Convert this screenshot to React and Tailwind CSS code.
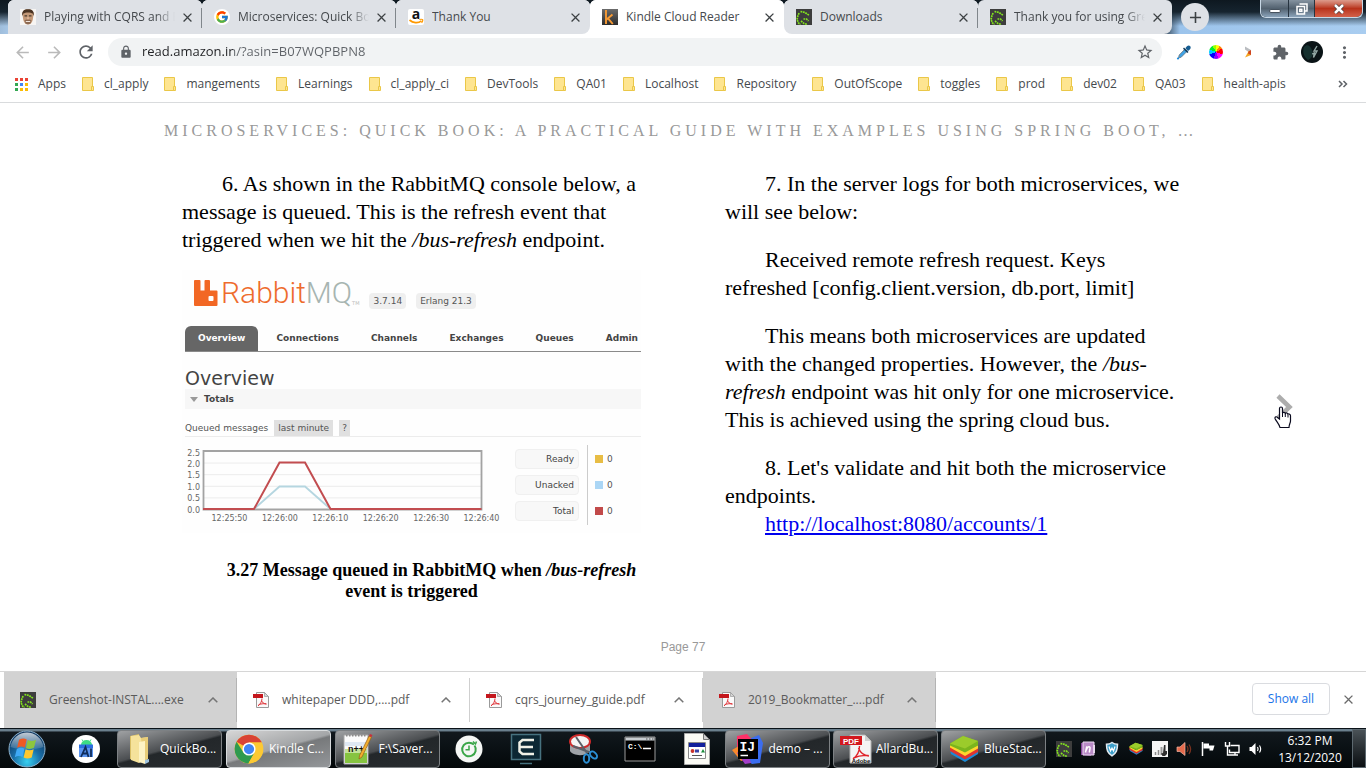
import React from "react";
import {
  MdArrowBack,
  MdArrowForward,
  MdRefresh,
  MdLock,
  MdStarBorder,
  MdExtension,
  MdMoreVert,
  MdClose,
  MdAdd,
} from "react-icons/md";
import { FcGoogle } from "react-icons/fc";

/* ---------- small drawings ---------- */

function FaceIcon() {
  return (
    <svg viewBox="0 0 16 16" className="size-4 shrink-0" aria-hidden="true">
      <rect width="16" height="16" fill="#f7f5f3" />
      <path d="M2.500 6C2 2 4.500.5 8 .5s6 1.500 5.500 5.500l-.8 5C12 14 10 15.500 8 15.500S4 14 3.300 11z" fill="#c39877" />
      <path d="M2.300 7C1.600 2 4 .3 8 .3S14.400 2 13.700 7l-1-2.500C10.500 3 5.500 3 3.300 4.500z" fill="#4a3322" />
      <path d="M4.500 11.500c1-1.300 6-1.300 7 0L10.500 14.500c-1.500 1-3.500 1-5 0z" fill="#8d6a52" />
      <path d="M5.800 12h4.400v1H5.800z" fill="#f2e6dd" />
      <path d="M4.500 6.300h2.600v1.200H4.500zM8.900 6.300h2.600v1.200H8.900z" fill="#4d3a2c" />
      <path d="M7.300 8h1.400l.4 2.300H6.900z" fill="#dcb294" />
    </svg>
  );
}

function AmazonIcon() {
  return (
    <svg viewBox="0 0 16 16" className="size-4 shrink-0" aria-hidden="true">
      <rect width="16" height="16" rx="2" fill="#fff" />
      <text x="8" y="9.500" textAnchor="middle" fontFamily="Open Sans, sans-serif" fontWeight="700" fontSize="14" fill="#111">a</text>
      <path d="M1.500 11c3.500 3 8.500 3.500 12 .9" fill="none" stroke="#ff9900" strokeWidth="1.700" />
      <path d="M11.300 10.500c1.700-.3 3-.2 3.300.2s-.1 1.900-1 3.100" fill="none" stroke="#ff9900" strokeWidth="1.200" />
    </svg>
  );
}

function KindleIcon() {
  return (
    <svg viewBox="0 0 16 16" className="size-4 shrink-0" aria-hidden="true">
      <defs>
        <linearGradient id="kg" x1="0" y1="0" x2="0" y2="1">
          <stop offset="0" stopColor="#6b6b6b" />
          <stop offset="1" stopColor="#2c2c2c" />
        </linearGradient>
      </defs>
      <rect width="16" height="16" fill="url(#kg)" />
      <path d="M4 1v14M10.500 5.500L4.500 10.500M6 9.300l4.800 5.700" fill="none" stroke="#f79a34" strokeWidth="1.900" />
    </svg>
  );
}

function GreenshotIcon() {
  return (
    <svg viewBox="0 0 16 16" className="size-4 shrink-0" aria-hidden="true">
      <rect width="16" height="16" fill="#3d3d3d" />
      <path d="M4.500 2.500l4.500 1 4.500 3M3 4L1.700 7.500l-.7 3 1.500 3.500 2 1.500M5 12l3 2.500 3.500 1M7.500 10h3l2 2" fill="none" stroke="#84e61e" strokeWidth="1.700" strokeDasharray="1.800 .7" />
    </svg>
  );
}

function PdfIcon() {
  return (
    <svg viewBox="0 0 16 16" className="size-4 shrink-0" aria-hidden="true">
      <path d="M3.500.5h8l4 4v11h-12z" fill="#fafafa" stroke="#9a9a9a" />
      <path d="M11.500.5v4h4z" fill="#d5d5d5" stroke="#9a9a9a" strokeWidth=".7" />
      <path d="M0 2h10v4H0z" fill="#c4161c" />
      <path d="M5 14c2-1.500 4-4.500 4-7.500M8.500 8.500c.8 2 2.500 3.500 5 3.700M5.500 12.800c2-.9 5-1.300 7.800-1.100" fill="none" stroke="#e0353a" strokeWidth="1" />
    </svg>
  );
}

function FolderIcon() {
  return (
    <svg viewBox="0 0 12 14" className="h-3.5 w-3 shrink-0" aria-hidden="true">
      <path d="M.5.5h10v13H.5z" fill="#fee591" stroke="#eac748" />
      <path d="M9.500 9.500h2v4h-2z" fill="#fee591" stroke="#eac748" />
    </svg>
  );
}

function AppsIcon() {
  const dots = ["#ea4335", "#ea4335", "#ea4335", "#34a853", "#4285f4", "#fbbc04", "#34a853", "#fbbc04", "#fbbc04"];
  return (
    <svg viewBox="0 0 13 13" className="size-[13px] shrink-0" aria-hidden="true">
      {dots.map((c, i) => (
        <rect key={i} x={(i % 3) * 5} y={Math.floor(i / 3) * 5} width="3" height="3" fill={c} />
      ))}
    </svg>
  );
}

function Caret() {
  return (
    <svg viewBox="0 0 10 6" className="h-1.5 w-2.5" aria-hidden="true">
      <path d="M.7 5.300L5 1l4.300 4.300" fill="none" stroke="#757575" strokeWidth="1.500" />
    </svg>
  );
}

function DropperIcon() {
  return (
    <svg viewBox="0 0 16 16" className="size-4" aria-hidden="true">
      <path d="M2.500 14l.7-3L9 5l2.200 2.200-6 6z" fill="#3ea3e6" stroke="#6b7680" strokeWidth=".8" />
      <path d="M8 3.500L12.500 8l-1.200 1L7 4.700z" fill="#123c5c" />
      <path d="M9.500 4.500C10.500 2 12.500.7 14 2s.5 3.500-2 5z" fill="#165d92" />
      <circle cx="2" cy="14.500" r="1.100" fill="#1a8be0" />
    </svg>
  );
}

function WheelIcon() {
  return (
    <span className="block size-3.5 rounded-full bg-[conic-gradient(#ff0_0_30deg,#ff8000_30deg_60deg,#f00_60deg_110deg,#f0f_110deg_160deg,#80f_160deg_200deg,#00f_200deg_250deg,#0cf_250deg_290deg,#0e3_290deg_330deg,#9f0_330deg)]" />
  );
}

function TriangleIcon() {
  return (
    <svg viewBox="0 0 16 16" className="size-4" aria-hidden="true">
      <path d="M5 2.500l6 3.500v5L8.500 8 5 5.500z" fill="#b9bcc0" />
      <path d="M5 13.500l4-7L11 8v3z" fill="#f5a623" />
      <path d="M8.500 7.500L11 6v5L8 9.500z" fill="#cf4520" />
    </svg>
  );
}

function ChromeLogo() {
  return (
    <svg viewBox="0 0 48 48" className="size-[30px] shrink-0" aria-hidden="true">
      <circle cx="24" cy="24" r="23" fill="#fcc934" />
      <path d="M24 24L4.100 12.500A23 23 0 0 1 43.900 12.500L44 13.500H24z" fill="#d94335" />
      <path d="M24 24L33.100 29.200 23 47A23 23 0 0 1 4.100 12.500L14.900 29.200z" fill="#2f9a4f" />
      <path d="M24 13.500h19.900A23 23 0 0 1 23 47l10.100-17.500z" fill="#fcc934" />
      <circle cx="24" cy="24" r="10.500" fill="#fff" />
      <circle cx="24" cy="24" r="8.200" fill="#4285f4" />
    </svg>
  );
}

function WindowsOrb() {
  return (
    <svg viewBox="0 0 38 38" className="size-[38px]" aria-hidden="true">
      <defs>
        <radialGradient id="orb" cx=".5" cy=".85" r=".85">
          <stop offset="0" stopColor="#38d0f0" />
          <stop offset=".45" stopColor="#1a6fa8" />
          <stop offset="1" stopColor="#0c2d55" />
        </radialGradient>
        <linearGradient id="shine" x1="0" y1="0" x2="0" y2="1">
          <stop offset="0" stopColor="#fff" stopOpacity=".75" />
          <stop offset="1" stopColor="#fff" stopOpacity=".12" />
        </linearGradient>
      </defs>
      <circle cx="19" cy="19" r="18" fill="url(#orb)" stroke="#8fb4cf" strokeWidth="1" />
      <path d="M2.500 17C4 8 11 2.500 19 2.500S34 8 35.500 17C28 20 10 20 2.500 17z" fill="url(#shine)" />
      <path d="M11 9.800c3-1.600 5.400-1.600 7.700-.3l-1.900 8c-2.400-1.400-5-1.300-7.700.3z" fill="#ee5a24" />
      <path d="M19.800 10c2.700 1.400 5.100 1.400 8.200-.2l-2 8c-2.900 1.500-5.500 1.500-8.100.2z" fill="#8cc63f" />
      <path d="M8.800 19c2.900-1.500 5.300-1.500 7.700-.2l-2 8.200c-2.400-1.400-4.900-1.300-7.700.2z" fill="#3fa9f5" />
      <path d="M17.600 19.300c2.600 1.300 5.200 1.300 8.100-.1l-2 8.200c-2.900 1.400-5.500 1.300-8.100 0z" fill="#fdc82f" />
    </svg>
  );
}

function AndroidStudioIcon() {
  return (
    <svg viewBox="0 0 28 28" className="size-7" aria-hidden="true">
      <circle cx="14" cy="14" r="14" fill="#fff" />
      <path d="M9 10a5.500 5 0 0 1 11 0z" fill="#3ddc84" />
      <path d="M11 6l-1-1.500M18 6l1-1.500" stroke="#3ddc84" />
      <path d="M7 9.500h14v4H7z" fill="#2d6fe0" />
      <path d="M7 13h14v9H7z" fill="#5b95f0" />
      <path d="M9 22l4.500-10 3 10M11 18.500h4.500M19 13.500V22" fill="none" stroke="#0f2d5c" strokeWidth="1.800" />
    </svg>
  );
}

function ExplorerIcon() {
  return (
    <svg viewBox="0 0 24 32" className="h-8 w-6 shrink-0" aria-hidden="true">
      <path d="M2 3l9-2v28l-9-3z" fill="#d9bf66" />
      <path d="M3 3l8-1 2 3 7-1v22l-9 4-8-3z" fill="#f5e29b" />
      <path d="M13 5l7-1v22l-4 2z" fill="#e8cd78" />
      <path d="M11 9l6-1v23l-6-2z" fill="#fdf3c4" />
      <path d="M17 27l4-1v3l-4 2z" fill="#9fc3df" />
    </svg>
  );
}

function NotepadIcon() {
  return (
    <svg viewBox="0 0 30 32" className="h-8 w-[30px] shrink-0" aria-hidden="true">
      <path d="M1 2h24v29H1z" fill="#fbfbfb" stroke="#a7a7a7" />
      <path d="M2 9h22v4H2z" fill="#dfe8f3" />
      <path d="M2 20h22v10H2z" fill="#86c440" />
      <path d="M2 16h22v4H2z" fill="#c4e39a" />
      <path d="M3 2.500h20" stroke="#8b8b8b" strokeDasharray="1.500 1.500" strokeWidth="2" />
      <text x="5" y="19" fontFamily="Liberation Sans, sans-serif" fontWeight="700" fontSize="9" fill="#111">n++</text>
      <path d="M26 3l2.500 1L19 24l-3 2 .5-3.500z" fill="#f2ae2e" stroke="#93601b" strokeWidth=".7" />
      <path d="M26 3l1-2 2.500 1-1 2z" fill="#c8303c" />
    </svg>
  );
}

function TimerIcon() {
  return (
    <svg viewBox="0 0 28 28" className="size-7" aria-hidden="true">
      <circle cx="14" cy="14" r="13.500" fill="#f5f7f5" />
      <path d="M19.500 10.500A6.800 6.800 0 1 1 14 7.700c2 0 3.500.6 5 1.800" fill="none" stroke="#3aa648" strokeWidth="2" />
      <path d="M14 10.500v4.200h-3.500M18 6.500l2.500 2.500 1-2.500" fill="none" stroke="#3aa648" strokeWidth="1.500" />
    </svg>
  );
}

function TerminalEIcon() {
  return (
    <svg viewBox="0 0 32 32" className="size-8" aria-hidden="true">
      <path d="M1.500 1.500h29v25h-29z" fill="#0c2733" stroke="#47727f" strokeWidth="1.500" />
      <path d="M24 7H12.500L9.500 9.500v9l3 2.500H24M10 14h13" fill="none" stroke="#f0f0e6" strokeWidth="2.500" />
      <path d="M10 30.500h12" stroke="#47727f" strokeWidth="1.500" />
    </svg>
  );
}

function SnipIcon() {
  return (
    <svg viewBox="0 0 32 32" className="size-8" aria-hidden="true">
      <path d="M3 9v9c3 5 15 6 20 0V9z" fill="#9ea2a7" />
      <ellipse cx="13" cy="8.500" rx="10" ry="6.500" fill="#f4f4f4" stroke="#cf2a2a" strokeWidth="2" />
      <path d="M9 4l11 16M6 13l17 6.500" stroke="#5a6068" strokeWidth="2" />
      <ellipse cx="19.500" cy="25.500" rx="2.700" ry="4.200" fill="none" stroke="#2b8fd4" strokeWidth="2" />
      <ellipse cx="26.500" cy="22" rx="2.700" ry="4.200" fill="none" stroke="#2b8fd4" strokeWidth="2" transform="rotate(-45 26.500 22)" />
    </svg>
  );
}

function CmdIcon() {
  return (
    <svg viewBox="0 0 32 26" className="h-[26px] w-8" aria-hidden="true">
      <path d="M1 1h30v24H1z" fill="#000" stroke="#9a9a9a" />
      <path d="M1.500 1.500h29v3h-29z" fill="#c7ccd0" />
      <path d="M22 3h1.500M25 3h1.500M28 3h1.500" stroke="#555" />
      <text x="4" y="13" fontFamily="Liberation Mono, monospace" fontSize="8" fontWeight="700" fill="#fff">C:\</text>
      <path d="M19 12.500h8" stroke="#fff" strokeWidth="1.500" />
    </svg>
  );
}

function AppWindowIcon() {
  return (
    <svg viewBox="0 0 26 32" className="h-8 w-[26px]" aria-hidden="true">
      <path d="M.5.5h19l6 6v25H.5z" fill="#fbfbf5" stroke="#aaa" />
      <path d="M19.500.5v6h6z" fill="#cfcfcf" stroke="#777" />
      <path d="M4.500 9.500h17v16h-17z" fill="#fff" stroke="#8b8b8b" />
      <path d="M5 10h16v4H5z" fill="#12209c" />
      <circle cx="8.500" cy="18" r="1.900" fill="#c8322b" />
      <path d="M11 16.500h4v3h-4z" fill="#3a43a8" />
      <path d="M17 19.500l2-3.500 2 3.500z" fill="#1a8c3b" />
      <path d="M8 22.500h10" stroke="#555" />
    </svg>
  );
}

function IntelliJIcon() {
  return (
    <svg viewBox="0 0 32 32" className="size-8 shrink-0" aria-hidden="true">
      <path d="M17 6l10-4 4 8-3 20-8 1-8-6z" fill="#3b6df0" />
      <path d="M5 3l10-2 6 7-8 14-8-4z" fill="#fe3168" />
      <path d="M0 17l7-4 5 14-3 1z" fill="#fb8a2c" />
      <path d="M5 20l8-8 6 18-6 1z" fill="#a43ec9" />
      <path d="M6 6h20v20H6z" fill="#000" />
      <text x="7.500" y="17.500" fontFamily="Liberation Mono, monospace" fontSize="13" fontWeight="700" fill="#fff">IJ</text>
      <path d="M8.500 22.500H16" stroke="#fff" strokeWidth="1.500" />
    </svg>
  );
}

function AcrobatIcon() {
  return (
    <svg viewBox="0 0 32 32" className="size-8 shrink-0" aria-hidden="true">
      <path d="M10 2h15l6 6v22H10z" fill="#f4f4f4" stroke="#b3b3b3" />
      <path d="M25 2v6h6z" fill="#cfcfcf" />
      <path d="M0 3h22v9H0z" fill="#d2181e" />
      <text x="11" y="10.500" textAnchor="middle" fontFamily="Liberation Sans, sans-serif" fontSize="8" fontWeight="700" fill="#fff">PDF</text>
      <path d="M13 26c4-3 6.500-8 6.500-13M18.500 15c1.500 4 5 7.500 10.500 8M13.500 25c4-2 9-3 15-2.500" fill="none" stroke="#e0242b" strokeWidth="1.400" />
      <text x="21" y="30" textAnchor="middle" fontFamily="Liberation Sans, sans-serif" fontSize="6" fontWeight="700" fill="#111">Adobe</text>
    </svg>
  );
}

function BlueStacksIcon({ className }) {
  return (
    <svg viewBox="0 0 30 27" className={className} aria-hidden="true">
      <path d="M1 15l14 7 14-6v3l-13 8L2 19z" fill="#1a8ad6" />
      <path d="M1 12l14 7 14-6v4l-13 7.500L1 16z" fill="#e0342f" />
      <path d="M1 9l14 7.500L29 10v3.500l-13 7.500L1 12.500z" fill="#ffd52e" />
      <path d="M1 8.500L14 1l15 5v4.500l-13 7L1 10.500z" fill="#7ab51d" />
      <path d="M1 8.500L14 1l15 5-13 7.500z" fill="#9bcb2b" />
    </svg>
  );
}

const tray = [
  {
    label: "Greenshot",
    icon: <GreenshotIcon />,
  },
  {
    label: "OneNote",
    icon: (
      <svg viewBox="0 0 16 16" className="size-4">
        <path d="M1 2l10-1v14l-10-1z" fill="#87479c" />
        <path d="M3 1h11v13H3z" fill="#b98bc7" stroke="#ead9f0" />
        <path d="M13 4h2v8h-2z" fill="#e6d6ec" />
        <path d="M5.500 11.500l1.300-6 .2 2c1-2 3.300-2.500 3 0l-.7 4" fill="none" stroke="#fff" strokeWidth="1.500" />
      </svg>
    ),
  },
  {
    label: "Shield",
    icon: (
      <svg viewBox="0 0 16 16" className="size-4">
        <path d="M8 1.500c2 1.500 4 1.800 5.500 1.800C13.500 9 12.500 12 8 14.800 3.500 12 2.500 9 2.500 3.300 4 3.300 6 3 8 1.500z" fill="#3d9fca" stroke="#e3eaf0" strokeWidth="1.500" />
        <path d="M5 5.500l1.500 4.500L8 7l1.500 3L11 5.500" fill="none" stroke="#fff" strokeWidth="1.200" />
      </svg>
    ),
  },
  { label: "BlueStacks", icon: <BlueStacksIcon className="h-[13px] w-3.5" /> },
  {
    label: "Usage",
    icon: (
      <svg viewBox="0 0 16 16" className="size-4">
        <path d="M0 0h16v16H0z" fill="#f5f5f5" />
        <path d="M3.500 14v-3M6.500 14V9" stroke="#8a8a8a" strokeWidth="1.500" />
        <path d="M8.500 14V6h2v8z" fill="#9d9d9d" />
        <path d="M12 4h1.500v6H15v3l-2 2h-2.500L9 12.500l2-.5z" fill="#303030" />
      </svg>
    ),
  },
  {
    label: "Sound device",
    icon: (
      <svg viewBox="0 0 16 16" className="size-4">
        <path d="M1 6h3l5-4.500v13L4 10.500H1z" fill="#e56a4c" stroke="#f1b5a5" strokeWidth=".7" />
        <path d="M11 5c1.300 2 1.300 4 0 6M13 3.500c2 3 2 6.500 0 9.500" fill="none" stroke="#79311f" strokeWidth="1.300" />
      </svg>
    ),
  },
  {
    label: "Action Center",
    icon: (
      <svg viewBox="0 0 16 16" className="size-4">
        <path d="M2.500 1v14" stroke="#fff" strokeWidth="1.500" />
        <path d="M3.500 2.500h5.500v2h5.500l-1.500 5H9.500V7.500h-6z" fill="#fff" />
      </svg>
    ),
  },
  {
    label: "Network",
    icon: (
      <svg viewBox="0 0 16 16" className="size-4">
        <path d="M6.500 4.500H15v7H5.500v-3M8 14h6M11 11.500V14" fill="none" stroke="#fff" strokeWidth="1.400" />
        <path d="M1.500 1v4h4V1M3.500 5v9H8" fill="none" stroke="#fff" strokeWidth="1.400" />
      </svg>
    ),
  },
  {
    label: "Volume",
    icon: (
      <svg viewBox="0 0 16 16" className="size-4">
        <path d="M1.500 6h2L7.500 2v12l-4-4h-2z" fill="#fff" />
        <path d="M9.500 6c.8 1.300.8 2.700 0 4M11.500 4.500c1.500 2.300 1.500 4.700 0 7" fill="none" stroke="#fff" strokeWidth="1.200" />
      </svg>
    ),
  },
];

/* ---------- browser chrome ---------- */

const tabs = [
  { title: "Playing with CQRS and Event Sourcing", icon: <FaceIcon />, back: "bg-white", divider: true, fade: true },
  {
    title: "Microservices: Quick Book: A Practical Guide",
    icon: (
      <span className="flex size-4 shrink-0 items-center justify-center rounded-full bg-white">
        <FcGoogle size={14} />
      </span>
    ),
    back: "bg-white",
    divider: true,
    fade: true,
  },
  { title: "Thank You", icon: <AmazonIcon />, back: "bg-white", shape: "rounded-br-lg" },
  { title: "Kindle Cloud Reader", icon: <KindleIcon />, back: "bg-white", active: true },
  { title: "Downloads", icon: <GreenshotIcon />, back: "bg-white", shape: "rounded-bl-lg", divider: true },
  { title: "Thank you for using Greenshot", icon: <GreenshotIcon />, shape: "rounded-br-lg", fade: true },
];

function TabStrip() {
  return (
    <header className="flex h-[34px] bg-[linear-gradient(to_bottom,#0e1820_0,#16242f_12px,transparent_26px),linear-gradient(to_right,#9fbddb_0,#a8c8e8_10px,#18242f_120px,#16222d_1160px,#9cc4ec_1180px,#a9cdf0)] pl-2">
      <div role="tablist" className="flex min-w-0">
        {tabs.map((t) => (
          <div key={t.title} className={`w-[194px] min-w-0 rounded-t-md ${t.back || ""}`}>
            <div className={`relative flex h-full items-center rounded-t-md pr-[7px] pl-3 ${t.active ? "bg-white" : "bg-[#dee1e6]"} ${t.shape || ""}`}>
              <button role="tab" aria-selected={!!t.active} className="flex min-w-0 flex-1 items-center gap-2 text-left">
                {t.icon}
                <span className={`flex-1 overflow-hidden text-xs whitespace-nowrap text-[#45494d] ${t.fade ? "mask-r-from-85%" : ""}`}>{t.title}</span>
              </button>
              <button aria-label="Close tab" className="ml-1 flex size-4 shrink-0 items-center justify-center text-[#3c4043]">
                <MdClose size={15} />
              </button>
              {t.divider && <span className="absolute top-2 right-0 h-5 w-px bg-[#80868b]" />}
            </div>
          </div>
        ))}
      </div>
      <button aria-label="New tab" className="mt-[3px] ml-[9px] flex size-7 shrink-0 items-center justify-center rounded-full bg-[#dee1e6] text-[#3c4043]">
        <MdAdd size={19} />
      </button>
      <div className="mr-[3px] ml-auto flex h-[18px] shrink-0 rounded-b-md border border-t-0 border-[#c8d8e6] bg-[#4f5f6d]">
        <button aria-label="Minimize" className="flex w-7 items-center justify-center rounded-bl-md border-r border-[#26333f] bg-linear-to-b from-[#8593a0] via-[#52616f] to-[#8ba4bb]">
          <span className="mt-1 h-1 w-3 rounded-xs border border-[#46525e] bg-white" />
        </button>
        <button aria-label="Restore" className="flex w-[26px] items-center justify-center border-r border-[#26333f] bg-linear-to-b from-[#8593a0] via-[#52616f] to-[#8ba4bb]">
          <svg viewBox="0 0 12 12" className="size-3">
            <path d="M3.500 1h7.500v7H9M1 3.500h7.500V11H1zM3.800 6.300h2v2h-2z" fill="none" stroke="#fff" strokeWidth="1.500" />
          </svg>
        </button>
        <button aria-label="Close" className="flex w-[47px] items-center justify-center rounded-br-md bg-linear-to-b from-[#dc9b8c] via-[#b8321a] to-[#d3614a]">
          <svg viewBox="0 0 12 10" className="h-2.5 w-3">
            <path d="M2 1l8 8M10 1L2 9" stroke="#4b3a3a" strokeWidth="4" />
            <path d="M2 1l8 8M10 1L2 9" stroke="#fff" strokeWidth="2.500" />
          </svg>
        </button>
      </div>
    </header>
  );
}

function Toolbar() {
  return (
    <div className="flex h-9 items-center bg-white pr-1.5 pl-1.5 text-[#5f6368]">
      <button aria-label="Back" className="flex w-8 justify-center text-[#bababa]"><MdArrowBack size={19} /></button>
      <button aria-label="Forward" className="flex w-8 justify-center text-[#bababa]"><MdArrowForward size={19} /></button>
      <button aria-label="Reload" className="flex w-8 justify-center"><MdRefresh size={20} /></button>
      <div className="ml-1.5 flex h-7 flex-1 items-center rounded-full bg-[#f1f3f4] pr-2 pl-[11px]">
        <MdLock size={14} className="shrink-0" />
        <input
          aria-label="Address"
          defaultValue="read.amazon.in/?asin=B07WQPBPN8"
          className="ml-[9px] min-w-0 flex-1 bg-[linear-gradient(90deg,#202124_91px,#5f6368_91px)] bg-clip-text text-[13px] text-transparent outline-none"
        />
        <button aria-label="Bookmark this page"><MdStarBorder size={18} /></button>
      </div>
      <div className="ml-1.5 flex items-center">
        <button aria-label="Colour picker" className="flex w-8 justify-center"><DropperIcon /></button>
        <button aria-label="Colour wheel" className="flex w-8 justify-center"><WheelIcon /></button>
        <button aria-label="Extension" className="flex w-8 justify-center"><TriangleIcon /></button>
        <button aria-label="Extensions" className="flex w-8 justify-center"><MdExtension size={17} /></button>
        <button aria-label="Profile" className="flex w-8 justify-center">
          <svg viewBox="0 0 22 22" className="size-[22px]">
            <circle cx="11" cy="11" r="11" fill="#0a1316" />
            <path d="M3 6c3-3 6-2 8 3s0 8-4 10C3 16 1 11 3 6z" fill="#16302f" />
            <path d="M16 5l-3 5h3l-3.500 6.500.8-4.500-2 1" fill="none" stroke="#93a8a5" strokeWidth="1.400" />
          </svg>
        </button>
        <button aria-label="Menu" className="flex w-8 justify-center"><MdMoreVert size={19} /></button>
      </div>
    </div>
  );
}

const bookmarks = [
  "cl_apply", "mangements", "Learnings", "cl_apply_ci", "DevTools", "QA01", "Localhost",
  "Repository", "OutOfScope", "toggles", "prod", "dev02", "QA03", "health-apis",
];

function BookmarksBar() {
  return (
    <nav aria-label="Bookmarks" className="flex h-[33px] items-center gap-4 border-b border-[#d9dbdd] bg-white pr-[18px] pb-1 pl-[15px] text-xs text-[#45494d]">
      <a href="#apps" className="flex items-center gap-2.5"><AppsIcon />Apps</a>
      {bookmarks.map((b) => (
        <a key={b} href={`#${b}`} className="flex items-center gap-2.5 whitespace-nowrap"><FolderIcon />{b}</a>
      ))}
      <button aria-label="More bookmarks" className="ml-auto text-[#5f6368]">
        <svg viewBox="0 0 10 8" className="h-2 w-2.5">
          <path d="M1 1l3 3-3 3M5.500 1l3 3-3 3" fill="none" stroke="currentColor" strokeWidth="1.500" />
        </svg>
      </button>
    </nav>
  );
}

/* ---------- book ---------- */

function QueueChart() {
  const ticks = ["2.5", "2.0", "1.5", "1.0", "0.5", "0.0"];
  const times = ["12:25:50", "12:26:00", "12:26:10", "12:26:20", "12:26:30", "12:26:40"];
  return (
    <svg viewBox="0 0 318 80" className="h-20 w-[318px] shrink-0" role="img" aria-label="Queued messages over the last minute">
      {ticks.map((t, i) => (
        <g key={t}>
          <path d={`M19 ${6.5 + i * 11.6}h278`} stroke="#ececec" />
          <text x="15" y={10.5 + i * 11.4} textAnchor="end" fontFamily="DejaVu Sans, sans-serif" fontSize="8" fill="#666">{t}</text>
        </g>
      ))}
      <path d="M18.500 6h278v58.500h-278z" fill="none" stroke="#a3a3a3" strokeWidth="1.800" />
      <path d="M69 64l25.500-22.500H120L145.500 64" fill="none" stroke="#b5d6e0" strokeWidth="1.800" />
      <path d="M18 64h51l25.500-46.500H120L145.500 64h151" fill="none" stroke="#c24d50" strokeWidth="2" />
      {times.map((t, i) => (
        <text key={t} x={44.5 + i * 50.4} y="76" textAnchor="middle" fontFamily="DejaVu Sans, sans-serif" fontSize="8" fill="#666">{t}</text>
      ))}
    </svg>
  );
}

function RabbitConsole() {
  return (
    <div className="bg-[#fefefe] pt-[3px] pl-[3px] font-['DejaVu_Sans',Verdana,sans-serif] text-[9px] text-[#555]">
      <div className="flex h-10 items-center pl-[9px]">
        <svg viewBox="0 0 24 26" className="h-[26px] w-6" aria-hidden="true">
          <path d="M1 0h4.500q1 0 1 1v9.500h4V1q0-1 1-1H15q1 0 1 1v9.500h6.500q1 0 1 1V25q0 1-1 1H1q-1 0-1-1V1q0-1 1-1zM15.500 16q-1 0-1 1v3q0 1 1 1h3q1 0 1-1v-3q0-1-1-1z" fill="#f26724" fillRule="evenodd" />
        </svg>
        <span className="ml-[3px] font-['Roboto',sans-serif] text-[30px] leading-10 font-light text-[#ee6b2d]">
          Rabbit<span className="text-[#a7b5b1]">MQ</span>
        </span>
        <span className="mt-5 text-[5px] text-[#bbb]">TM</span>
        <span className="mt-4 ml-2.5 rounded bg-[#efefef] px-1 leading-4">3.7.14</span>
        <span className="mt-4 ml-2.5 rounded bg-[#efefef] px-1 leading-4">Erlang 21.3</span>
      </div>
      <div className="mt-[13px] flex border-b border-[#8a8a8a] leading-[25px] font-bold text-[#444]">
        <a href="#overview" className="rounded-t-md bg-[#666] px-[13px] text-white">Overview</a>
        <div className="flex flex-1 justify-between pr-[3px] pl-[18px]">
          <a href="#connections">Connections</a>
          <a href="#channels">Channels</a>
          <a href="#exchanges">Exchanges</a>
          <a href="#queues">Queues</a>
          <a href="#admin">Admin</a>
        </div>
      </div>
      <h2 className="mt-[15px] text-[19px] leading-[22px] text-[#444]">Overview</h2>
      <div className="flex h-5 items-center gap-1.5 bg-[#f7f7f7] pl-[5px] font-bold text-[#444]">
        <span className="border-x-4 border-t-[5px] border-x-transparent border-t-[#999]" />
        Totals
      </div>
      <div className="mt-[11px] flex items-center gap-1.5 border-b border-[#ececec] leading-4">
        Queued messages
        <span className="bg-[#e0e0e0] px-1">last minute</span>
        <span className="bg-[#e0e0e0] px-[3px]">?</span>
      </div>
      <div className="mt-2 flex pb-2">
        <QueueChart />
        <div className="ml-3 flex w-16 flex-col gap-1.5 pt-1 text-right text-[#444]">
          {["Ready", "Unacked", "Total"].map((l) => (
            <span key={l} className="rounded-sm border border-[#f0f0f0] bg-[#f8f8f8] pr-1 leading-[18px]">{l}</span>
          ))}
        </div>
        <div className="ml-2 flex flex-col gap-1.5 border-l border-[#ccc] pt-1 pl-[7px] leading-5">
          <span className="flex items-center gap-1"><i className="size-2 bg-[#e8bd45]" />0</span>
          <span className="flex items-center gap-1"><i className="size-2 bg-[#abd6f5]" />0</span>
          <span className="flex items-center gap-1"><i className="size-2 bg-[#c24a4a]" />0</span>
        </div>
      </div>
    </div>
  );
}

function Book() {
  return (
    <main className="flex flex-1 bg-white">
      <div className="w-[164px] shrink" />
      <article className="flex min-w-0 flex-1 flex-col font-['Liberation_Serif',Georgia,serif] text-black">
        <h1 className="mt-[18px] truncate text-base leading-5 tracking-[4px] text-[#999] uppercase">
          Microservices: Quick Book: A Practical Guide with Examples Using Spring Boot, …
        </h1>
        <div className="mt-[29px] grid flex-1 grid-cols-2 gap-[84px] px-[18px] text-[22px] leading-7">
          <section>
            <p className="indent-10">
              6. As shown in the RabbitMQ console below, a message is queued. This is the refresh event that triggered when we hit the <em>/bus-refresh</em> endpoint.
            </p>
            <figure className="mt-4">
              <RabbitConsole />
              <figcaption className="mt-[27px] indent-10 text-center text-[18px] leading-[21px] font-bold">
                3.27 Message queued in RabbitMQ when <em>/bus-refresh</em> event is triggered
              </figcaption>
            </figure>
          </section>
          <section className="flex flex-col gap-5">
            <p className="indent-10">7. In the server logs for both microservices, we will see below:</p>
            <p className="indent-10">Received remote refresh request. Keys refreshed [config.client.version, db.port, limit]</p>
            <p className="indent-10">
              This means both microservices are updated with the changed properties. However, the <em>/bus-refresh</em> endpoint was hit only for one microservice. This is achieved using the spring cloud bus.
            </p>
            <div>
              <p className="indent-10">8. Let's validate and hit both the microservice endpoints.</p>
              <p className="pl-10"><a href="http://localhost:8080/accounts/1" className="text-[#0000ee] underline">http://localhost:8080/accounts/1</a></p>
            </div>
          </section>
        </div>
        <p className="pb-4 text-center font-['Liberation_Sans',Arial,sans-serif] text-xs leading-4 text-[#999]">Page 77</p>
      </article>
      <div className="flex w-[164px] shrink items-center justify-center pt-10">
        <button aria-label="Next page" className="relative">
          <svg viewBox="0 0 18 28" className="h-7 w-[18px]">
            <path d="M3 3l11.500 11L3 25" fill="none" stroke="#adadad" strokeWidth="4.500" />
          </svg>
          <svg viewBox="0 0 18 23" className="absolute top-[13px] -left-px h-[23px] w-[18px]" aria-hidden="true">
            <path d="M5.500 13V2.500c0-2 3-2 3 0V7c.5-1 2.500-1 2.800.5.800-.9 2.400-.6 2.600.7 1-.6 2.600 0 2.600 1.500V15c0 2-1.500 3.500-1.500 6.500H6C5.500 18.500 2 15 1 12.500c-.4-1.800 1.500-2.300 2.500-1z" fill="#fff" stroke="#0a0a1e" strokeWidth="1.200" />
            <path d="M8.500 7v4M11.300 8v3M14 9v2.500" stroke="#0a0a1e" />
          </svg>
        </button>
      </div>
    </main>
  );
}

/* ---------- downloads and taskbar ---------- */

const downloads = [
  { name: "Greenshot-INSTAL....exe", icon: <GreenshotIcon />, done: true },
  { name: "whitepaper DDD,....pdf", icon: <PdfIcon /> },
  { name: "cqrs_journey_guide.pdf", icon: <PdfIcon /> },
  { name: "2019_Bookmatter_....pdf", icon: <PdfIcon />, done: true },
];

function DownloadShelf() {
  return (
    <section aria-label="Downloads" className="flex h-[57px] items-stretch border-t border-[#d6d6d6] bg-white pr-2.5 pl-1 text-xs text-[#5a5a5a]">
      {downloads.map((d) => (
        <div key={d.name} className={`flex w-[233px] items-center ${d.done ? "bg-[#d2d2d2]" : ""}`}>
          <button className="flex min-w-0 flex-1 items-center gap-[13px] pl-4 whitespace-nowrap">{d.icon}{d.name}</button>
          <button aria-label={`Options for ${d.name}`} className="px-[18px]"><Caret /></button>
          <span className={`h-11 w-px ${d.done ? "bg-[#b4b4b4]" : "bg-[#cfcfcf]"}`} />
        </div>
      ))}
      <div className="ml-auto flex items-center gap-[11px] pb-0.5">
        <button className="h-8 w-[78px] rounded border border-[#dadce0] text-[#1a73e8]">Show all</button>
        <button aria-label="Close downloads bar" className="text-[#6b6b6b]"><MdClose size={15} /></button>
      </div>
    </section>
  );
}

function TaskButton({ icon, children, active }) {
  return (
    <button
      className={`flex h-[38px] w-[105px] items-center gap-1 rounded-sm border px-1.5 text-xs whitespace-nowrap text-white ${
        active
          ? "border-[#d9dcde] bg-[linear-gradient(165deg,#d6d6d6,#a3a5a7_48%,#77797b_52%,#94979a)]"
          : "border-[#7d8184] bg-[linear-gradient(165deg,#a0a2a4,#4b4e51_48%,#23272a_52%,#292d30)]"
      }`}
    >
      <span className="flex w-8 shrink-0 justify-center">{icon}</span>
      <span className="flex-1 text-center">{children}</span>
    </button>
  );
}

const launchers = [
  { label: "Timer", icon: <TimerIcon /> },
  { label: "Console", icon: <TerminalEIcon /> },
  { label: "Snipping Tool", icon: <SnipIcon /> },
  { label: "Command Prompt", icon: <CmdIcon /> },
  { label: "Application", icon: <AppWindowIcon /> },
];

function Taskbar() {
  return (
    <footer className="flex h-10 items-center border-t border-[#0a1218] bg-linear-to-b from-[#6a7f8d] from-[2px] via-[#11181d] via-[3px] to-[#04080a] text-white">
      <button aria-label="Start" className="flex w-[54px] shrink-0 justify-center"><WindowsOrb /></button>
      <button aria-label="Android Studio" className="flex w-[63px] shrink-0 justify-center"><AndroidStudioIcon /></button>
      <div className="flex shrink-0 gap-1">
        <TaskButton icon={<ExplorerIcon />}>QuickBo...</TaskButton>
        <TaskButton icon={<ChromeLogo />} active>Kindle C...</TaskButton>
        <TaskButton icon={<NotepadIcon />}>F:\Saver...</TaskButton>
      </div>
      <div className="flex shrink-0">
        {launchers.map((l) => (
          <button key={l.label} aria-label={l.label} className="flex w-[57px] items-center justify-center">{l.icon}</button>
        ))}
      </div>
      <div className="flex shrink-0 gap-[3px]">
        <TaskButton icon={<IntelliJIcon />}>demo – ...</TaskButton>
        <TaskButton icon={<AcrobatIcon />}>AllardBu...</TaskButton>
        <TaskButton icon={<BlueStacksIcon className="h-[27px] w-[30px]" />}>BlueStac...</TaskButton>
      </div>
      <div className="ml-auto flex">
        {tray.map((t) => (
          <button key={t.label} aria-label={t.label} className="flex w-6 items-center justify-center">{t.icon}</button>
        ))}
      </div>
      <div className="w-[84px] text-center text-xs leading-[17px]">
        <div>6:32 PM</div>
        <div>13/12/2020</div>
      </div>
      <button aria-label="Show desktop" className="h-full w-3.5 border border-[#5d6970] bg-linear-to-b from-[#4a5257] to-[#0b0f12]" />
    </footer>
  );
}

export default function App() {
  return (
    <div className="flex min-h-screen flex-col bg-white font-['Open_Sans','Segoe_UI',sans-serif]">
      <TabStrip />
      <Toolbar />
      <BookmarksBar />
      <Book />
      <DownloadShelf />
      <Taskbar />
    </div>
  );
}
